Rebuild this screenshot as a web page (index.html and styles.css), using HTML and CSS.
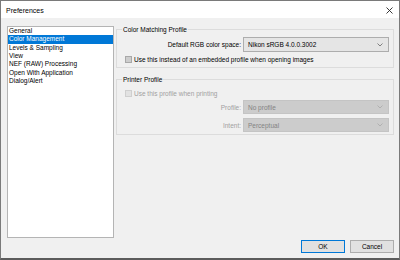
FILE: index.html
```html
<!DOCTYPE html>
<html>
<head>
<meta charset="utf-8">
<link rel="stylesheet" href="styles.css">
</head>
<body>
<div class="window">
  <div class="titlebar">
    <span class="title">Preferences</span>
    <svg class="close" width="7" height="7" viewBox="0 0 7 7"><path d="M0.5 0.5 L6.5 6.5 M6.5 0.5 L0.5 6.5" stroke="#222" stroke-width="0.9" fill="none"/></svg>
  </div>
  <div class="body">
    <div class="main">
      <ul class="list">
        <li>General</li>
        <li class="sel">Color Management</li>
        <li>Levels &amp; Sampling</li>
        <li>View</li>
        <li>NEF (RAW) Processing</li>
        <li>Open With Application</li>
        <li>Dialog/Alert</li>
      </ul>
      <div class="panel">
        <fieldset class="group g1">
          <legend>Color Matching Profile</legend>
          <div class="row r1">
            <span class="lbl">Default RGB color space:</span>
            <div class="select s1"><span>Nikon sRGB 4.0.0.3002</span><svg width="6" height="4" viewBox="0 0 6 4"><path d="M0.5 0.5 L3 3 L5.5 0.5" stroke="#666" stroke-width="0.8" fill="none"/></svg></div>
          </div>
          <div class="check c1"><span class="box"></span><span>Use this instead of an embedded profile when opening images</span></div>
        </fieldset>
        <fieldset class="group g2">
          <legend>Printer Profile</legend>
          <div class="check c2 disabled"><span class="box"></span><span>Use this profile when printing</span></div>
          <div class="row r2">
            <span class="lbl disabled">Profile:</span>
            <div class="select dis"><span>No profile</span><svg width="6" height="4" viewBox="0 0 6 4"><path d="M0.5 0.5 L3 3 L5.5 0.5" stroke="#a8a8a8" stroke-width="0.8" fill="none"/></svg></div>
          </div>
          <div class="row r3">
            <span class="lbl disabled">Intent:</span>
            <div class="select dis"><span>Perceptual</span><svg width="6" height="4" viewBox="0 0 6 4"><path d="M0.5 0.5 L3 3 L5.5 0.5" stroke="#a8a8a8" stroke-width="0.8" fill="none"/></svg></div>
          </div>
        </fieldset>
      </div>
    </div>
    <div class="buttons">
      <button class="btn ok">OK</button>
      <button class="btn">Cancel</button>
    </div>
  </div>
</div>
</body>
</html>
```
FILE: styles.css
```css
html, body {
  margin: 0;
  padding: 0;
  background: #6b6b6b;
}
.window {
  width: 400px;
  height: 260px;
  box-sizing: border-box;
  border: 1px solid #7a7a7a;
  border-bottom: 2px solid #5c5c5c;
  display: flex;
  flex-direction: column;
  font-family: "Liberation Sans", Arial, sans-serif;
  font-size: 6.5px;
  color: #000;
  background: #f0f0f0;
}
.titlebar {
  height: 17px;
  background: #fff;
  display: flex;
  align-items: center;
  justify-content: space-between;
  padding: 0 6px 0 5px;
  flex-shrink: 0;
}
.title {
  font-size: 7px;
  margin-top: 1px;
}
.close {
  margin-top: 1px;
}
.body {
  flex: 1;
  display: flex;
  flex-direction: column;
  padding: 8px 5px 0 6px;
}
.main {
  display: flex;
  gap: 2px;
  height: 212px;
}
.list {
  list-style: none;
  margin: 0;
  padding: 0;
  width: 107px;
  box-sizing: border-box;
  border: 1px solid #b4b4b4;
  background: #fff;
}
.list li {
  height: 8.33px;
  line-height: 8.33px;
  padding-left: 1px;
  white-space: nowrap;
}
.list li.sel {
  background: #0078d7;
  color: #fff;
}
.panel {
  flex: 1;
  display: flex;
  flex-direction: column;
}
.group {
  margin: 0;
  border: 1px solid #dcdcdc;
  padding: 0 4px 0 8px;
  min-width: 0;
}
.group legend {
  padding: 0 1px;
  margin-left: -3px;
  line-height: 7px;
}
.g1 { margin-top: 0; padding-bottom: 4px; }
.g2 { margin-top: 8px; padding-bottom: 2px; }
.row {
  display: flex;
  justify-content: flex-end;
  align-items: center;
  gap: 2px;
}
.r1 { margin-top: 4px; }
.r2 { margin-top: 3px; }
.r3 { margin-top: 4px; }
.lbl { white-space: nowrap; }
.select {
  width: 146px;
  box-sizing: border-box;
  height: 14px;
  display: flex;
  align-items: center;
  justify-content: space-between;
  padding: 0 5px 0 4px;
  border: 1px solid #adadad;
  background: #e5e5e5;
}
.s1 { height: 15px; }
.select.dis {
  background: #cccccc;
  border-color: #c4c4c4;
  color: #838383;
}
.check {
  display: flex;
  align-items: center;
  gap: 2px;
  height: 8px;
  white-space: nowrap;
}
.c1 { margin-top: 3px; }
.c2 { margin-top: 6px; }
.box {
  width: 7px;
  height: 7px;
  box-sizing: border-box;
  border: 1px solid #a8a8a8;
  background: #cdcdcd;
}
.disabled { color: #a0a0a0; }
.c2 .box {
  border-color: #cfcfcf;
  background: #e2e2e2;
}
.buttons {
  display: flex;
  justify-content: flex-end;
  gap: 5px;
  margin-top: 2px;
  padding-right: 0;
}
.btn {
  width: 44px;
  height: 13px;
  box-sizing: border-box;
  margin: 0;
  padding: 0;
  font-family: "Liberation Sans", Arial, sans-serif;
  font-size: 6.5px;
  color: #000;
  background: #e1e1e1;
  border: 1px solid #adadad;
  border-radius: 0;
}
.btn.ok {
  border-color: #0078d7;
}
```
